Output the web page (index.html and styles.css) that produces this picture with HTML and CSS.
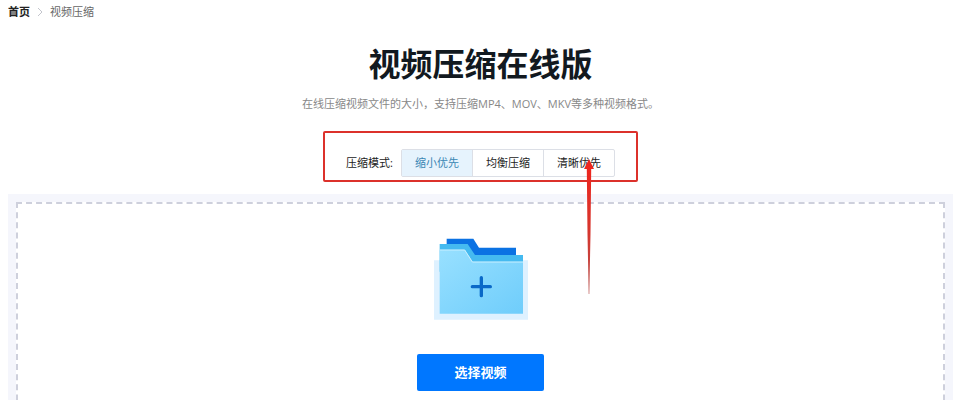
FILE: index.html
```
<!DOCTYPE html>
<html lang="zh-CN">
<head>
    <meta charset="UTF-8">
    <meta name="viewport" content="width=device-width, initial-scale=1.0">
    <title>视频压缩在线版</title>
    <link rel="stylesheet" href="styles.css">
</head>
<body>
    <nav class="breadcrumb">
        <a href="#" class="home">首页</a>
        <svg class="chevron" viewBox="0 0 6 10" width="6" height="10"><path d="M1 1l4 4-4 4" fill="none" stroke="#c3c5cc"/></svg>
        <a href="#">视频压缩</a>
    </nav>

    <main class="page">
        <h1>视频压缩在线版</h1>
        <p class="intro">在线压缩视频文件的大小，支持压缩MP4、MOV、MKV等多种视频格式。</p>

        <div class="mode-box">
            <span class="mode-label" id="mode-label">压缩模式:</span>
            <div class="modes" role="radiogroup" aria-labelledby="mode-label">
                <label class="mode"><input type="radio" name="mode" checked><span>缩小优先</span></label>
                <label class="mode"><input type="radio" name="mode"><span>均衡压缩</span></label>
                <label class="mode"><input type="radio" name="mode"><span>清晰优先</span></label>
            </div>
            <svg class="arrow" viewBox="0 0 12 136" width="12" height="136">
                <defs>
                    <linearGradient id="tail" x1="0" y1="0" x2="0" y2="1">
                        <stop offset="0" stop-color="#f0241c"/>
                        <stop offset="0.5" stop-color="#d8342c"/>
                        <stop offset="1" stop-color="#b8504c"/>
                    </linearGradient>
                </defs>
                <path d="M6 0l5 10H8.200L7.500 75 6.300 135H5.700L4.500 75 3.800 10H1z" fill="url(#tail)"/>
            </svg>
        </div>

        <section class="upload">
            <div class="drop-area">
                <svg class="folder" viewBox="39 39 288 246" width="96" height="82">
                    <defs>
                        <linearGradient id="front" x1="0" y1="0" x2="1" y2="1">
                            <stop offset="0" stop-color="#98e0ff"/>
                            <stop offset="1" stop-color="#6fcdfb"/>
                        </linearGradient>
                    </defs>
                    <path d="M42 106h282v178H42z" fill="#def1ff"/>
                    <path d="M80 41h80l17 27h111v40H80z" fill="#0b72e3"/>
                    <path d="M59 57h84l22 33h144v50H59z" fill="#45baf0"/>
                    <path d="M59 74h76l23 36h151v156H59z" fill="url(#front)"/>
                    <path d="M59 75h75l23 36h152" fill="none" stroke="#c9efff" stroke-width="3"/>
                    <path d="M184 158v54M157 185h54" stroke="#0a69c8" stroke-width="10" stroke-linecap="round"/>
                </svg>
                <button type="button" class="choose">选择视频</button>
            </div>
        </section>
    </main>
</body>
</html>
```

FILE: styles.css
```
* {
    box-sizing: border-box;
}
body {
    display: flex;
    flex-direction: column;
    height: 100vh;
    margin: 0;
    padding: 4px 2px 0 8px;
    overflow: hidden;
    background-color: #fff;
    color: #222;
    font-family: "Open Sans", "Noto Sans CJK SC", sans-serif;
    font-size: 11px;
    line-height: 16px;
}
.breadcrumb {
    display: flex;
    align-items: center;
    gap: 7px;
}
.breadcrumb a {
    color: #666;
    text-decoration: none;
}
.breadcrumb .home {
    color: #222;
    font-weight: bold;
}
.page {
    display: flex;
    flex: 1;
    flex-direction: column;
    align-items: center;
    min-height: 0;
}
h1 {
    margin: 24px 0 12px;
    color: #12191f;
    font-size: 32px;
    line-height: 40px;
}
.intro {
    margin: 0;
    color: #888;
}
.mode-box {
    position: relative;
    display: flex;
    align-items: center;
    gap: 8px;
    margin: 19px 0 12px;
    padding: 16px 21px 3px;
    border: 2px solid #dc312b;
    border-radius: 2px;
}
.modes {
    display: flex;
    border: 1px solid #dcdfe6;
    border-radius: 2px;
}
.mode {
    position: relative;
    cursor: pointer;
}
.mode + .mode {
    border-left: 1px solid #dcdfe6;
}
.mode input {
    position: absolute;
    margin: 0;
    opacity: 0;
}
.mode span {
    display: block;
    padding: 0 13px;
    line-height: 26px;
}
.mode input:checked + span {
    background-color: #e6f3fd;
    color: #3a86b4;
}
.arrow {
    position: absolute;
    top: 26px;
    right: 41px;
}
.upload {
    align-self: stretch;
    flex: 1;
    min-height: 0;
    padding: 8px 8px 0;
    overflow: hidden;
    background-color: #f5f6fc;
}
.drop-area {
    display: flex;
    flex-direction: column;
    align-items: center;
    gap: 34px;
    min-height: 320px;
    padding: 34px 0;
    border: 2px dashed #ced0dc;
    background-color: #fff;
}
.choose {
    padding: 0 37px;
    border: none;
    border-radius: 2px;
    background-color: #0077ff;
    color: #fff;
    font-family: inherit;
    font-size: 13px;
    font-weight: bold;
    line-height: 37px;
    cursor: pointer;
}
```
